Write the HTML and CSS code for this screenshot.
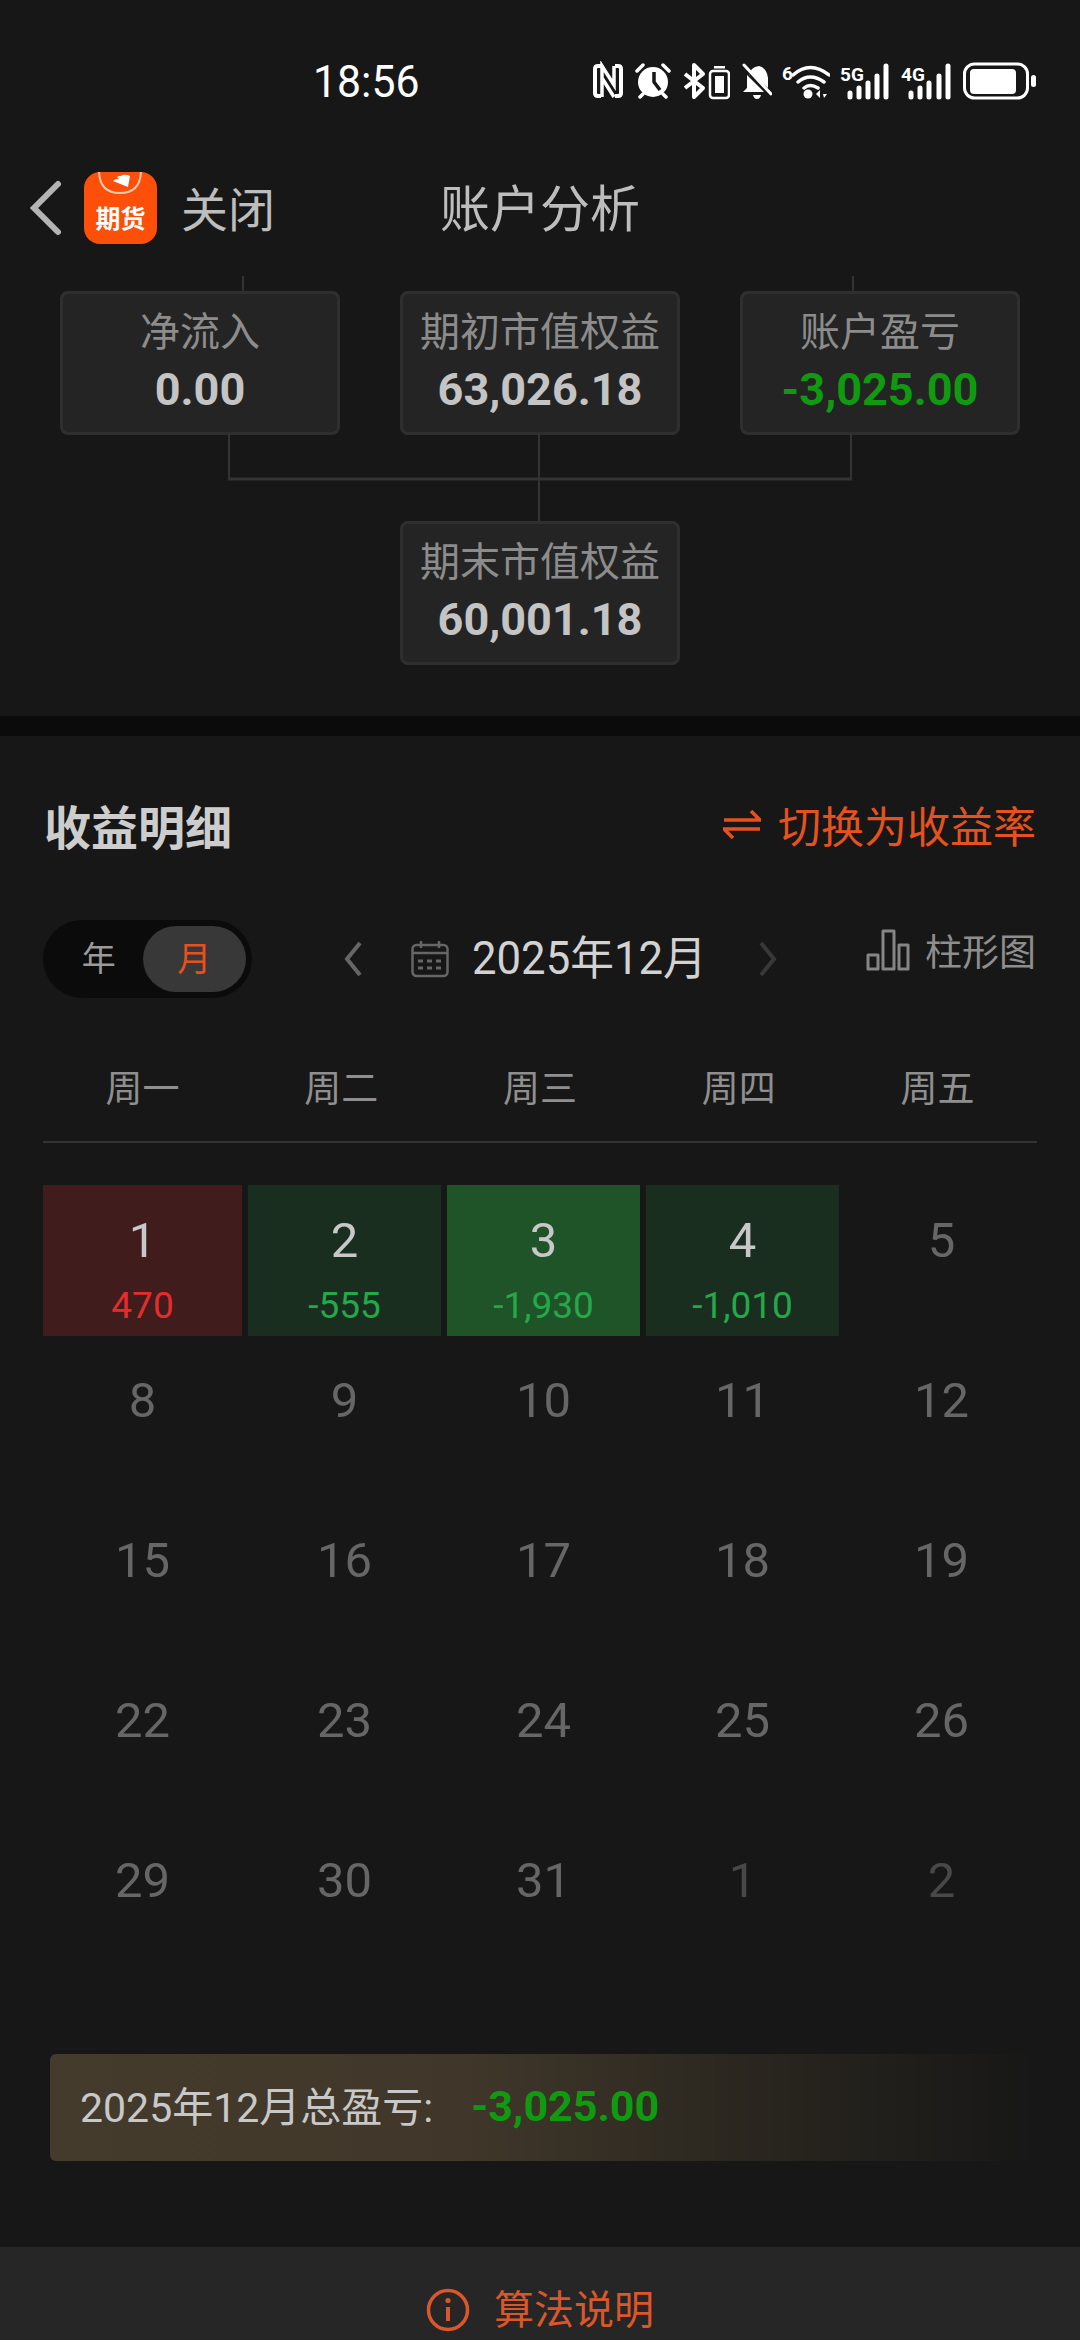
FILE: index.html
```html
<!DOCTYPE html>
<html lang="zh-CN">
<head>
    <meta charset="UTF-8">
    <meta name="viewport" content="width=device-width, initial-scale=1.0">
    <title>账户分析</title>
    <link rel="stylesheet" href="styles.css">
</head>
<body>
    <div class="page">
        <div class="status">
            <span class="time">18:56</span>
            <div class="status-icons">
                <!-- nfc -->
                <svg class="ic" width="30" height="40" viewBox="0 0 30 40"><path d="M8 5H5Q2 5 2 8V32Q2 35 5 35H8M22 5H25Q28 5 28 8V32Q28 35 25 35H22" fill="none" stroke="#fff" stroke-width="4"/><path d="M9 36V5L21 24V5M9 17L21 36" fill="none" stroke="#fff" stroke-width="3.5"/></svg>
                <!-- alarm -->
                <svg class="ic" width="36" height="40" viewBox="0 0 36 40"><circle cx="18" cy="21" r="15" fill="#fff"/><path d="M19 11V21L25 29" fill="none" stroke="#171717" stroke-width="3.5"/><path d="M2 10L8 4M34 10L28 4M5 36L8 33M31 36L28 33" stroke="#fff" stroke-width="3.5" stroke-linecap="round"/></svg>
                <!-- bluetooth and its battery -->
                <svg class="ic" width="47" height="40" viewBox="0 0 47 40"><path d="M2 13L20 27L11 36V4L20 13L2 27" fill="none" stroke="#fff" stroke-width="4" stroke-linejoin="round"/><rect x="27" y="10" width="19" height="27" rx="3" fill="none" stroke="#fff" stroke-width="2.5"/><rect x="32" y="15" width="9" height="17" fill="#fff"/><rect x="31" y="5" width="11" height="2.5" fill="#fff"/></svg>
                <!-- muted bell -->
                <svg class="ic" width="30" height="40" viewBox="0 0 30 40"><path d="M7 15Q8 6 17 5Q25 7 26 17V27L7 10ZM1 31L5 27V14L22 31Z" fill="#fff"/><path d="M11 34H19Q18 38 15 38Q12 38 11 34Z" fill="#fff"/><path d="M2 6L29 35" stroke="#171717" stroke-width="2"/><path d="M2 4L29 33" stroke="#fff" stroke-width="3" stroke-linecap="round"/></svg>
                <!-- wifi -->
                <svg class="ic tight" width="48" height="40" viewBox="0 0 48 40"><text class="tiny" x="0" y="19">6</text><path d="M11 14Q28 -1 47 14M16 21Q28 11 42 21M22 27Q28 22 36 27" fill="none" stroke="#fff" stroke-width="3.5" stroke-linecap="round"/><circle cx="26" cy="33" r="4.5" fill="#fff"/><path d="M34 33L38 29V37ZM42 37L45 33H41Z" fill="#fff"/></svg>
                <!-- 5G signal -->
                <svg class="ic tight" width="49" height="40" viewBox="0 0 49 40"><text class="tiny" x="0" y="20">5G</text><path d="M10 32V36M19 27V36M28 22V36M37 15V36M46 5V36" stroke="#fff" stroke-width="5" stroke-linecap="round"/></svg>
                <!-- 4G signal -->
                <svg class="ic" width="50" height="40" viewBox="0 0 50 40"><text class="tiny" x="0" y="20">4G</text><path d="M10 32V36M19 27V36M28 22V36M38 15V36M47 5V36" stroke="#fff" stroke-width="5" stroke-linecap="round"/></svg>
                <!-- battery -->
                <svg class="ic" width="73" height="40" viewBox="0 0 73 40"><rect x="1.5" y="3" width="63" height="34" rx="10" fill="none" stroke="#fff" stroke-width="3"/><rect x="7" y="8" width="46" height="25" rx="4" fill="#fff"/><rect x="68" y="14" width="5" height="12" rx="2.5" fill="#fff"/></svg>
            </div>
        </div>

        <div class="nav">
            <svg class="back" width="36" height="60" viewBox="0 0 36 60"><path d="M31 6L7 30L31 54" fill="none" stroke="#b4b4b4" stroke-width="6" stroke-linecap="round"/></svg>
            <div class="app-logo">
                <svg class="app-mark" width="73" height="40" viewBox="0 0 73 40"><path d="M15 -2Q15 21 36 21Q57 21 57 -2" fill="none" stroke="#ffc9b0" stroke-width="2"/><path d="M44 15L29 9Q32 6 36 7ZM44 15L33 5Q36 3 40 4ZM44 15L38 3Q42 2 46 4Z" fill="#fff"/></svg>
                <span class="app-name">期货</span>
            </div>
            <span class="close">关闭</span>
            <span class="nav-title">账户分析</span>
        </div>

        <div class="flow">
            <svg class="stubs" width="1080" height="15" viewBox="0 0 1080 15"><path class="line" d="M243 0V15M853 0V15"/></svg>
            <div class="box-row">
                <div class="box">
                    <div class="box-label">净流入</div>
                    <div class="box-value">0.00</div>
                </div>
                <div class="box">
                    <div class="box-label">期初市值权益</div>
                    <div class="box-value">63,026.18</div>
                </div>
                <div class="box">
                    <div class="box-label">账户盈亏</div>
                    <div class="box-value down">-3,025.00</div>
                </div>
            </div>
            <svg class="joins" width="1080" height="86" viewBox="0 0 1080 86"><path class="line" d="M229 0V44M851 0V44M539 0V86"/><path class="line thick" d="M228 44H852"/></svg>
            <div class="box-row">
                <div class="box box-end">
                    <div class="box-label">期末市值权益</div>
                    <div class="box-value">60,001.18</div>
                </div>
            </div>
        </div>

        <div class="band"></div>

        <div class="detail-head">
            <h2>收益明细</h2>
            <div class="switch">
                <svg width="38" height="30" viewBox="0 0 38 30"><path d="M1 11H37L28 2M37 20H1L10 29" fill="none" stroke="#e5521f" stroke-width="3.5"/></svg>
                <span>切换为收益率</span>
            </div>
        </div>

        <div class="toolbar">
            <div class="toggle">
                <span class="toggle-item">年</span>
                <span class="toggle-item on">月</span>
            </div>
            <svg class="prev" width="20" height="36" viewBox="0 0 20 36"><path d="M17 2L4 18L17 34" fill="none" stroke="#666" stroke-width="4"/></svg>
            <svg class="cal" width="38" height="38" viewBox="0 0 38 38"><rect x="1.5" y="5" width="35" height="31" rx="4" fill="none" stroke="#666" stroke-width="2.5"/><path d="M1.5 13H36.5M10 1V8M28 1V8" stroke="#666" stroke-width="2.5"/><path d="M7 21H31M7 28H31" stroke="#666" stroke-width="3" stroke-dasharray="5 4"/></svg>
            <span class="month">2025年12月</span>
            <svg class="next" width="20" height="36" viewBox="0 0 20 36"><path d="M3 2L16 18L3 34" fill="none" stroke="#383838" stroke-width="4"/></svg>
            <div class="chart-link">
                <svg width="44" height="42" viewBox="0 0 44 42"><path d="M2 26H12V40H2ZM17 2H28V40H17ZM33 16H42V40H33Z" fill="none" stroke="#858585" stroke-width="3" stroke-linejoin="round"/></svg>
                <span>柱形图</span>
            </div>
        </div>

        <div class="weekdays">
            <span>周一</span><span>周二</span><span>周三</span><span>周四</span><span>周五</span>
        </div>

        <div class="days">
            <div class="day up"><div class="num">1</div><div class="val">470</div></div>
            <div class="day low"><div class="num">2</div><div class="val">-555</div></div>
            <div class="day mid"><div class="num">3</div><div class="val">-1,930</div></div>
            <div class="day low"><div class="num">4</div><div class="val">-1,010</div></div>
            <div class="day"><div class="num">5</div></div>
            <div class="day"><div class="num">8</div></div>
            <div class="day"><div class="num">9</div></div>
            <div class="day"><div class="num">10</div></div>
            <div class="day"><div class="num">11</div></div>
            <div class="day"><div class="num">12</div></div>
            <div class="day"><div class="num">15</div></div>
            <div class="day"><div class="num">16</div></div>
            <div class="day"><div class="num">17</div></div>
            <div class="day"><div class="num">18</div></div>
            <div class="day"><div class="num">19</div></div>
            <div class="day"><div class="num">22</div></div>
            <div class="day"><div class="num">23</div></div>
            <div class="day"><div class="num">24</div></div>
            <div class="day"><div class="num">25</div></div>
            <div class="day"><div class="num">26</div></div>
            <div class="day"><div class="num">29</div></div>
            <div class="day"><div class="num">30</div></div>
            <div class="day"><div class="num">31</div></div>
            <div class="day other"><div class="num">1</div></div>
            <div class="day other"><div class="num">2</div></div>
        </div>

        <div class="summary">
            <span class="summary-label">2025年12月总盈亏:</span>
            <span class="summary-value">-3,025.00</span>
        </div>

        <div class="footer">
            <svg width="44" height="44" viewBox="0 0 44 44"><circle cx="22" cy="22" r="19.5" fill="none" stroke="#d9572a" stroke-width="3.5"/><circle cx="22" cy="12.5" r="2.6" fill="#d9572a"/><path d="M22 19V33" stroke="#d9572a" stroke-width="4"/></svg>
            <span>算法说明</span>
        </div>
    </div>
</body>
</html>
```

FILE: styles.css
```css
* {
    box-sizing: border-box;
}

body {
    margin: 0;
    background-color: #171717;
    font-family: Roboto, "Noto Sans CJK SC", sans-serif;
}

.page {
    width: 1080px;
    height: 2340px;
    overflow: hidden;
    background-color: #171717;
}

/* status bar */
.status {
    display: flex;
    align-items: center;
    justify-content: space-between;
    height: 42px;
    margin-top: 60px;
    padding: 0 44px 0 313px;
}

.time {
    display: inline-block;
    color: #fff;
    font-size: 45px;
    transform: scaleX(.95);
    transform-origin: left center;
}

.status-icons {
    display: flex;
    gap: 12px;
}

.ic {
    display: block;
}

.tight {
    margin-left: -2px;
}

.tiny {
    font-size: 19px;
    font-weight: bold;
    fill: #fff;
}

/* nav */
.nav {
    position: relative;
    display: flex;
    align-items: center;
    height: 72px;
    margin-top: 70px;
    padding-left: 27px;
}

.back {
    display: block;
}

.app-logo {
    position: relative;
    width: 73px;
    height: 72px;
    margin-left: 21px;
    padding-top: 33px;
    overflow: hidden;
    border-radius: 16px;
    background-color: #fb4f0a;
    color: #fff;
    font-size: 25px;
    font-weight: 700;
    line-height: 30px;
    text-align: center;
}

.app-name {
    white-space: nowrap;
}

.app-mark {
    position: absolute;
    top: 0;
    left: 0;
}

.close {
    margin-left: 24px;
    margin-top: 5px;
    color: #bdbdbd;
    font-size: 47px;
    line-height: 68px;
}

.nav-title {
    position: absolute;
    top: 0;
    left: 0;
    width: 1080px;
    color: #bdbdbd;
    font-size: 50px;
    line-height: 77px;
    text-align: center;
}

/* account flow chart */
.flow {
    margin-top: 32px;
    padding-bottom: 51px;
}

.stubs,
.joins {
    display: block;
}

.line {
    fill: none;
    stroke: #333;
    stroke-width: 2;
}

.thick {
    stroke-width: 3;
}

.box-row {
    display: grid;
    grid-template-columns: repeat(3, 280px);
    gap: 60px;
    padding-left: 60px;
}

.box {
    height: 144px;
    padding-top: 15px;
    border: 3px solid #2f2f2f;
    border-radius: 8px;
    background-color: #242424;
    text-align: center;
}

.box-end {
    grid-column: 2;
}

.box-label {
    color: #8c8c8c;
    font-size: 40px;
    line-height: 48px;
}

.box-value {
    color: #c4c4c4;
    font-size: 45px;
    font-weight: 700;
    line-height: 66px;
}

.box-value.down {
    color: #109a10;
}

.band {
    height: 20px;
    background-color: #0b0b0b;
}

/* detail header */
.detail-head {
    display: flex;
    align-items: center;
    justify-content: space-between;
    height: 56px;
    margin-top: 60px;
    padding: 0 44px;
}

.detail-head h2 {
    margin: 0;
    color: #cdcdcd;
    font-size: 47px;
    font-weight: 700;
}

.switch {
    display: flex;
    align-items: center;
    gap: 17px;
    color: #e5521f;
    font-size: 43px;
}

/* year/month toolbar */
.toolbar {
    display: flex;
    align-items: center;
    height: 78px;
    margin-top: 68px;
    padding: 0 44px 0 43px;
}

.toggle {
    display: flex;
    align-items: center;
    justify-content: space-between;
    width: 209px;
    height: 78px;
    padding: 6px;
    border-radius: 39px;
    background-color: #0b0b0b;
    font-size: 34px;
}

.toggle-item {
    width: 94px;
    padding-left: 6px;
    color: #9a9a9a;
    line-height: 62px;
    text-align: center;
}

.toggle-item.on {
    width: 104px;
    padding-left: 0;
    border-radius: 33px;
    background-color: #383838;
    color: #e5521f;
    line-height: 66px;
}

.prev {
    margin-left: 91px;
}

.cal {
    margin-left: 48px;
}

.month {
    display: inline-block;
    margin: 0 0 10px 23px;
    color: #d2d2d2;
    font-size: 46px;
    white-space: nowrap;
    transform: scaleX(.95);
    transform-origin: left center;
}

.next {
    margin-left: 39px;
}

.chart-link {
    display: flex;
    align-items: center;
    gap: 15px;
    margin-left: auto;
    margin-bottom: 18px;
    color: #8e8e8e;
    font-size: 37px;
}

/* calendar */
.weekdays {
    display: grid;
    grid-template-columns: repeat(5, 1fr);
    height: 84px;
    margin: 61px 43px 0;
    border-bottom: 2px solid #333;
    color: #8f8f8f;
    font-size: 37px;
    line-height: 62px;
    text-align: center;
}

.days {
    display: grid;
    grid-template-columns: 199px repeat(4, 193px);
    gap: 9px 6px;
    margin: 42px 43px 0;
}

.day {
    height: 151px;
    padding-top: 26px;
    text-align: center;
}

.num {
    color: #666;
    font-size: 49px;
    line-height: 60px;
}

.val {
    margin-top: 15px;
    color: #25a84a;
    font-size: 37px;
    line-height: 40px;
}

.day.up {
    background-color: #401c1c;
}

.day.up .val {
    color: #e42c2c;
}

.day.low {
    background-color: #1a2e1f;
}

.day.mid {
    background-color: #1e5428;
}

.day.up .num,
.day.low .num,
.day.mid .num {
    color: #c8c8c8;
}

.day.other .num {
    color: #484848;
}

/* month total */
.summary {
    display: flex;
    align-items: center;
    width: 985px;
    height: 107px;
    margin: 78px 0 0 50px;
    padding-left: 30px;
    border-radius: 6px;
    background: linear-gradient(to right, #453b2c 0%, #40372a 42%, #2c2820 68%, #171717 100%);
}

.summary-label {
    margin-bottom: 8px;
    color: #c8c8c8;
    font-size: 41px;
    white-space: nowrap;
}

.summary-value {
    margin-left: 38px;
    margin-bottom: 4px;
    color: #109a10;
    font-size: 43px;
    font-weight: 700;
}

.footer {
    display: flex;
    align-items: center;
    justify-content: center;
    gap: 24px;
    height: 93px;
    margin-top: 86px;
    padding-top: 33px;
    background-color: #262626;
    color: #d9572a;
    font-size: 40px;
    line-height: 57px;
}
```
